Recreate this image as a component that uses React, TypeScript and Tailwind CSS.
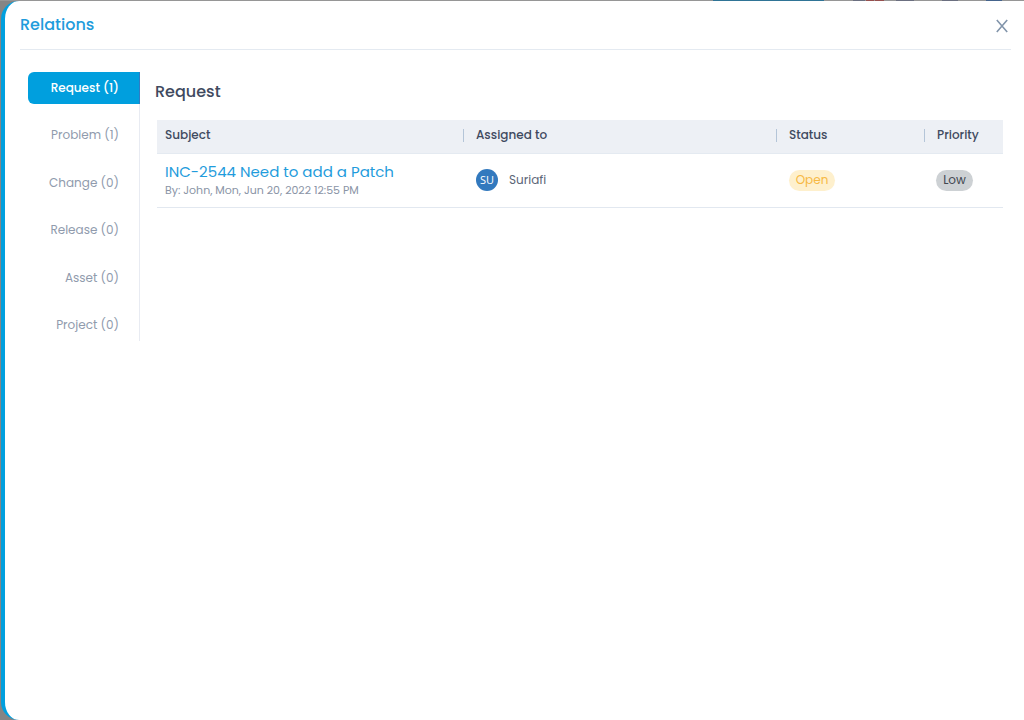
import { useState } from "react";

interface Relation {
  id: string;
  subject: string;
  meta: string;
  initials: string;
  assignee: string;
  status: string;
  priority: string;
}

const tabs = [
  { name: "Request", count: 1 },
  { name: "Problem", count: 1 },
  { name: "Change", count: 0 },
  { name: "Release", count: 0 },
  { name: "Asset", count: 0 },
  { name: "Project", count: 0 },
];

const relations: Relation[] = [
  {
    id: "INC-2544",
    subject: "Need to add a Patch",
    meta: "By: John, Mon, Jun 20, 2022 12:55 PM",
    initials: "SU",
    assignee: "Suriafi",
    status: "Open",
    priority: "Low",
  },
];

const columns = ["Subject", "Assigned to", "Status", "Priority"];

// Sliver of the dimmed page that stays visible above the drawer
function PageEdge() {
  return (
    <div className="flex h-px justify-end bg-[#969696] pr-[22px]">
      <span className="mr-[29px] w-[111px] bg-[#2f7496]" />
      <span className="mr-px w-3 bg-[#6b6f80]" />
      <span className="mr-px w-2 bg-[#96504f]" />
      <span className="mr-3 w-[9px] bg-[#96504f]" />
      <span className="mr-7 w-[18px] bg-[#6b6f80]" />
      <span className="mr-7 w-4 bg-[#6b6f80]" />
      <span className="w-4 bg-[#45648c]" />
    </div>
  );
}

function RelationsTable() {
  return (
    <table className="w-full table-fixed border-collapse text-left text-xs leading-5">
      <colgroup>
        <col />
        <col className="w-[37%]" />
        <col className="w-[148px]" />
        <col className="w-[79px]" />
      </colgroup>
      <thead>
        <tr className="h-[33px] border-b border-[#e4eaf1] bg-[#edf0f5] text-[#3f4a60]">
          {columns.map((column, index) => (
            <th key={column} className="p-0 pb-0.5 font-medium">
              {index === 0 ? (
                <span className="pl-2">{column}</span>
              ) : (
                <div className="flex items-center gap-3">
                  <span className="h-[13px] w-px bg-[#b4c5d8]" />
                  {column}
                </div>
              )}
            </th>
          ))}
        </tr>
      </thead>
      <tbody>
        {relations.map((item) => (
          <tr key={item.id} className="h-[54px] border-b border-[#e2e8f0]">
            <td className="p-0 pl-2">
              <a href="#" className="block text-[15px] leading-5 whitespace-nowrap text-[#1f9cdc]">
                {item.id} {item.subject}
              </a>
              <div className="text-[11px] leading-4 text-[#8a94a6]">{item.meta}</div>
            </td>
            <td className="p-0 pl-[13px]">
              <div className="flex items-center gap-[11px] text-[#5c6678]">
                <span className="flex size-[22px] items-center justify-center rounded-full bg-[#3279be] font-['Open_Sans',sans-serif] text-[11px] text-white">
                  {item.initials}
                </span>
                {item.assignee}
              </div>
            </td>
            <td className="p-0 pl-[13px]">
              <span className="inline-flex h-[21px] w-[46px] items-center justify-center rounded-full bg-[#fef0cd] align-middle text-[#f7b944]">
                {item.status}
              </span>
            </td>
            <td className="p-0 pl-3">
              <span className="inline-flex h-[21px] w-[37px] items-center justify-center rounded-full bg-[#cdd1d4] align-middle text-[#414750]">
                {item.priority}
              </span>
            </td>
          </tr>
        ))}
      </tbody>
    </table>
  );
}

export default function App() {
  const [active, setActive] = useState("Request");

  return (
    <div className="flex min-h-screen flex-col bg-[#858585] font-['Poppins','Inter',sans-serif]">
      <PageEdge />
      <div className="flex grow pl-px">
        <section className="grow rounded-l-[18px] border-l-4 border-[#009fde] bg-white pr-[13px] pl-[15px]">
          <header className="flex h-[49px] items-center justify-between border-b border-[#e4eaf1]">
            <h1 className="text-base leading-6 font-medium text-[#1f9cdc]">Relations</h1>
            <button type="button" aria-label="Close" className="mt-0.5 mr-[3px] text-[#8295ab]">
              <svg width="12" height="14" viewBox="0 0 12 14" fill="none" stroke="currentColor" strokeWidth="1.6">
                <path d="M0.8 1 11.2 13M11.2 1 0.8 13" />
              </svg>
            </button>
          </header>

          <div className="flex pt-[22px] pr-2 pl-2">
            <nav className="flex h-[269px] w-28 shrink-0 flex-col justify-between self-start border-r border-[#e8ebf2]">
              {tabs.map((tab) => (
                <button
                  key={tab.name}
                  type="button"
                  onClick={() => setActive(tab.name)}
                  className={`h-8 rounded-l-md pr-5 text-right text-xs leading-5 whitespace-nowrap ${
                    active === tab.name ? "-mr-px border-r border-[#2f7cc4] bg-[#009fde] font-medium text-white" : "text-[#909bad]"
                  }`}
                >
                  {tab.name} ({tab.count})
                </button>
              ))}
            </nav>

            <main className="min-w-0 grow pl-[15px]">
              <h2 className="pt-2 text-base leading-6 font-medium text-[#3f4a60]">{active}</h2>
              <div className="mt-4 ml-0.5">
                <RelationsTable />
              </div>
            </main>
          </div>
        </section>
      </div>
    </div>
  );
}
